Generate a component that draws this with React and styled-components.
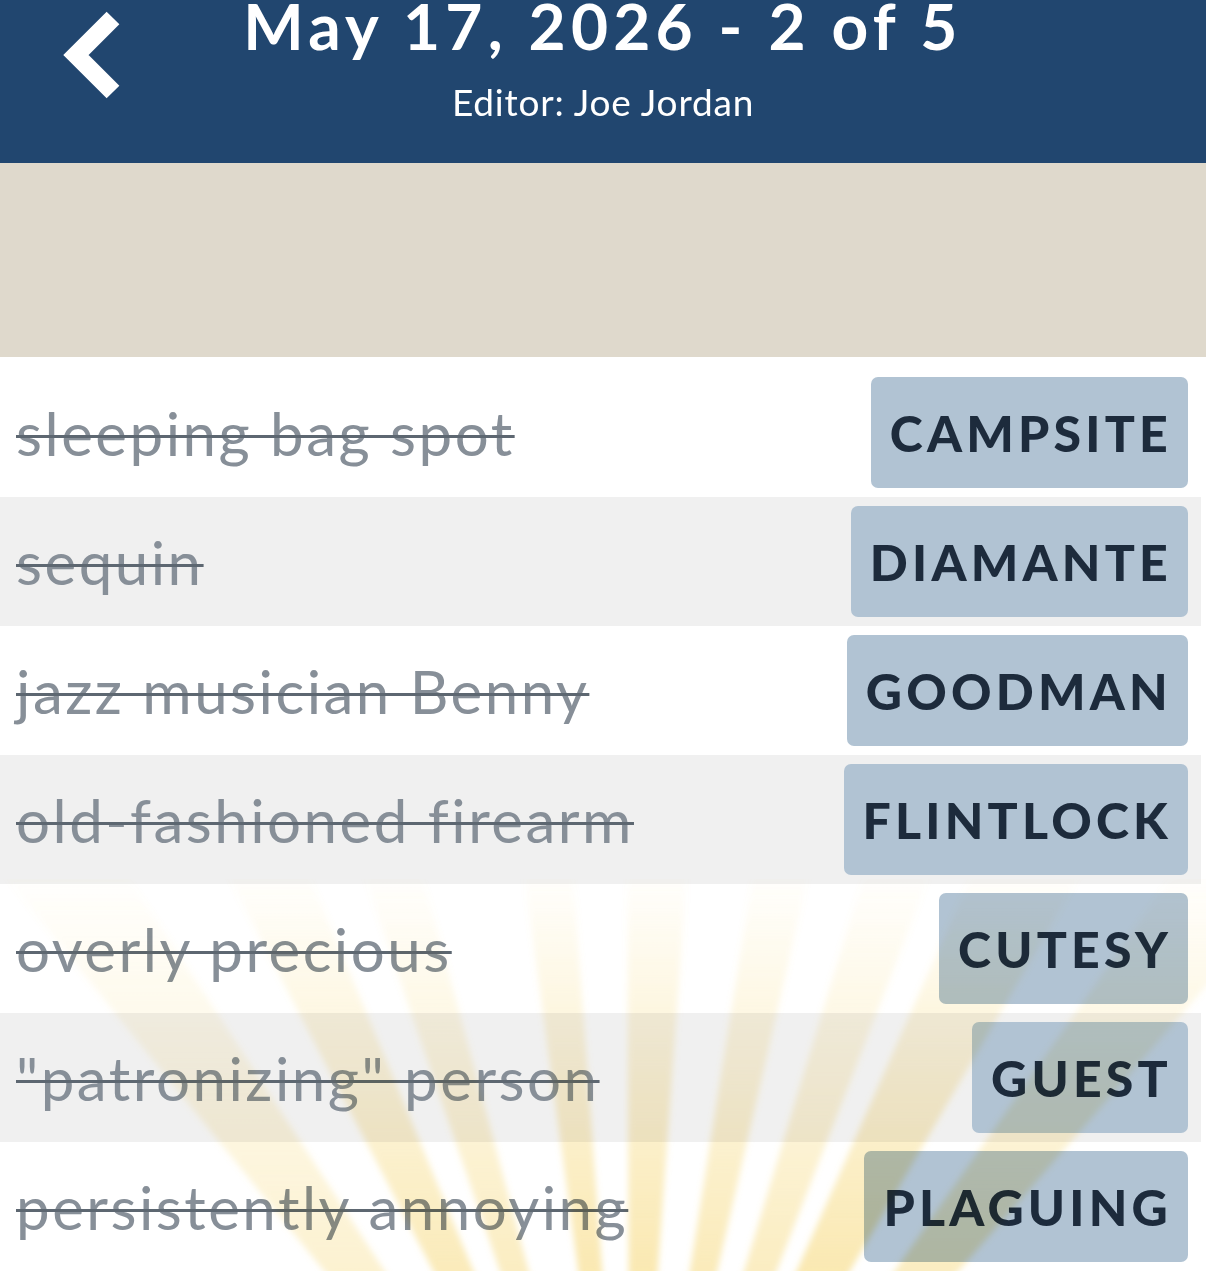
import React from 'react';
import styled, { createGlobalStyle } from 'styled-components';

const GlobalStyle = createGlobalStyle`
  html, body {
    margin: 0;
    padding: 0;
    background: #ffffff;
  }
  body {
    font-family: 'Lato', 'Noto Sans', sans-serif;
    overflow: hidden;
  }
`;

const Page = styled.div`
  display: flex;
  flex-direction: column;
  width: 100%;
`;

const Header = styled.header`
  display: grid;
  grid-template-columns: 1fr auto 1fr;
  align-items: start;
  height: 163px;
  box-sizing: border-box;
  background: #21466f;
  color: #ffffff;
`;

const BackButton = styled.button`
  justify-self: start;
  display: flex;
  padding: 0;
  margin: 0 0 0 52px;
  border: none;
  background: transparent;
  cursor: pointer;
`;

const Titles = styled.div`
  display: flex;
  flex-direction: column;
  align-items: center;
`;

const Title = styled.h1`
  margin: -6px 0 0;
  font-family: 'Lato', sans-serif;
  font-weight: 700;
  font-size: 64px;
  line-height: 1;
  letter-spacing: 5.2px;
  white-space: nowrap;
`;

const Subtitle = styled.div`
  margin-top: 25px;
  font-family: 'Lato', sans-serif;
  font-size: 37px;
  letter-spacing: 0.8px;
  line-height: 1;
`;

const Banner = styled.div`
  height: 194px;
  background: #dfd9cc;
`;

const List = styled.ul`
  position: relative;
  list-style: none;
  margin: 0;
  padding: 11px 0 0;
`;

const Row = styled.li`
  display: flex;
  align-items: center;
  justify-content: space-between;
  height: 129px;
  margin-right: 5px;
  padding: 0 13px 0 16px;
  box-sizing: border-box;
  background: ${({ $shaded }) => ($shaded ? '#f0f0f0' : '#ffffff')};
`;

const Clue = styled.span`
  font-family: 'Lato', sans-serif;
  font-size: 60px;
  letter-spacing: 2.5px;
  color: #878f98;
  text-decoration: line-through;
  text-decoration-color: #5d6771;
  text-decoration-thickness: 3px;
  white-space: nowrap;
`;

const Answer = styled.span`
  display: flex;
  align-items: center;
  height: 111px;
  padding: 0 16px 0 19px;
  border-radius: 7px;
  background: #b1c3d3;
  color: #1d2b3c;
  font-family: 'Lato', sans-serif;
  font-weight: 900;
  font-size: 50px;
  letter-spacing: 4.2px;
`;

const Rays = styled.svg`
  position: absolute;
  left: 0;
  bottom: 0;
  width: 100%;
  height: 392px;
  pointer-events: none;
  mix-blend-mode: multiply;
`;

const clues = [
  ['sleeping bag spot', 'CAMPSITE'],
  ['sequin', 'DIAMANTE'],
  ['jazz musician Benny', 'GOODMAN'],
  ['old-fashioned firearm', 'FLINTLOCK'],
  ['overly precious', 'CUTESY'],
  ['"patronizing" person', 'GUEST'],
  ['persistently annoying', 'PLAGUING'],
];

// sunburst behind the last rows: angle from vertical, half width (degrees), strength
const rays = [
  { a: -36, w: 3, o: 0.6 },
  { a: -25, w: 2.5, o: 0.9 },
  { a: -17, w: 2, o: 0.8 },
  { a: -6, w: 1.8, o: 1 },
  { a: 2, w: 2.2, o: 1 },
  { a: 11, w: 2, o: 0.9 },
  { a: 19, w: 2.2, o: 0.8 },
  { a: 27, w: 3.2, o: 1 },
  { a: 38, w: 3, o: 0.8 },
];

const CX = 630;
const CY = 770;
const R = 1400;

const rayPoints = ({ a, w }) => {
  const p = (deg) => {
    const t = (deg * Math.PI) / 180;
    return `${CX + R * Math.sin(t)},${CY - R * Math.cos(t)}`;
  };
  return `${CX},${CY} ${p(a - w)} ${p(a + w)}`;
};

const Chevron = () => (
  <svg width="80" height="110" viewBox="52 0 80 110">
    <polyline
      points="113,18 76,55 113,92"
      fill="none"
      stroke="#ffffff"
      strokeWidth="18"
      strokeLinejoin="miter"
      strokeLinecap="butt"
    />
  </svg>
);

const App = () => (
  <Page>
    <GlobalStyle />
    <Header>
      <BackButton aria-label="Back">
        <Chevron />
      </BackButton>
      <Titles>
        <Title>May 17, 2026 - 2 of 5</Title>
        <Subtitle>Editor: Joe Jordan</Subtitle>
      </Titles>
    </Header>
    <Banner />
    <List>
      {clues.map(([clue, answer], i) => (
        <Row key={answer} $shaded={i % 2 === 1}>
          <Clue>{clue}</Clue>
          <Answer>{answer}</Answer>
        </Row>
      ))}
      <Rays viewBox="0 0 1206 392" preserveAspectRatio="none">
        <defs>
          <linearGradient id="rayFade" gradientUnits="userSpaceOnUse" x1="0" y1="0" x2="0" y2="392">
            <stop offset="0" stopColor="#f6d774" stopOpacity="0.02" />
            <stop offset="0.3" stopColor="#f6d774" stopOpacity="0.2" />
            <stop offset="1" stopColor="#f6d774" stopOpacity="0.55" />
          </linearGradient>
          <filter id="raySoft" x="-10%" y="-10%" width="120%" height="120%">
            <feGaussianBlur stdDeviation="3" />
          </filter>
        </defs>
        <g filter="url(#raySoft)">
          {rays.map((r) => (
            <polygon key={r.a} points={rayPoints(r)} fill="url(#rayFade)" opacity={r.o} />
          ))}
        </g>
      </Rays>
    </List>
  </Page>
);

export default App;
